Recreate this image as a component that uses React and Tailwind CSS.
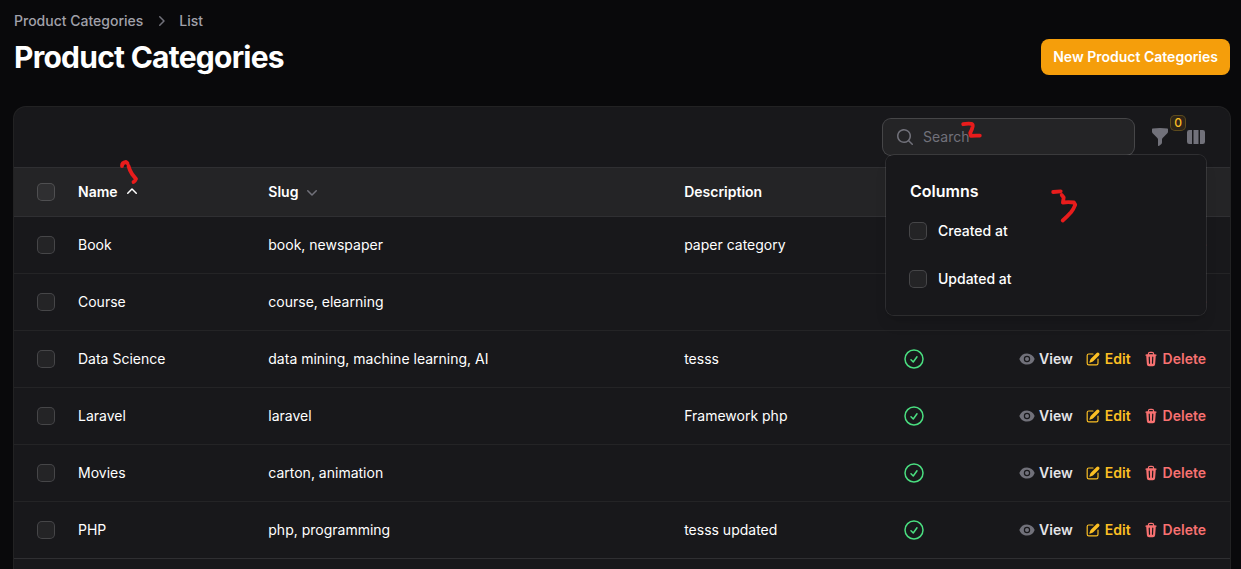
import React from "react";
import {
  HiMiniChevronDown,
  HiMiniChevronRight,
  HiMiniChevronUp,
  HiMiniEye,
  HiMiniFunnel,
  HiMiniMagnifyingGlass,
  HiMiniPencilSquare,
  HiMiniTrash,
  HiMiniViewColumns,
  HiOutlineCheckCircle,
} from "react-icons/hi2";

const categories = [
  { name: "Book", slug: "book, newspaper", description: "paper category" },
  { name: "Course", slug: "course, elearning", description: "" },
  { name: "Data Science", slug: "data mining, machine learning, AI", description: "tesss" },
  { name: "Laravel", slug: "laravel", description: "Framework php" },
  { name: "Movies", slug: "carton, animation", description: "" },
  { name: "PHP", slug: "php, programming", description: "tesss updated" },
];

function Checkbox(props) {
  return (
    <input
      type="checkbox"
      className="block size-4 shrink-0 appearance-none rounded bg-white/5 ring-1 ring-white/20 checked:bg-amber-500"
      {...props}
    />
  );
}

function RowAction({ icon: Icon, label, iconClass, textClass }) {
  return (
    <a href="#" className="flex items-center gap-1 font-semibold">
      <Icon className={`size-4 ${iconClass}`} />
      <span className={textClass}>{label}</span>
    </a>
  );
}

function ColumnsMenu() {
  return (
    <fieldset className="absolute top-full right-0 z-10 mt-2 w-80 rounded-lg bg-[#18181b] p-6 shadow-lg ring-1 ring-white/10">
      <h2 className="text-base leading-6 font-semibold">Columns</h2>
      <div className="mt-4 flex flex-col gap-6">
        {["Created at", "Updated at"].map((label) => (
          <label key={label} className="flex items-center gap-3 text-sm leading-6 font-medium">
            <Checkbox />
            {label}
          </label>
        ))}
      </div>
    </fieldset>
  );
}

function Toolbar() {
  return (
    <div className="flex items-center justify-end gap-4 px-6 py-3">
      <label className="flex h-9 w-[251px] items-center gap-2 rounded-lg bg-white/5 px-3 ring-1 ring-white/20">
        <HiMiniMagnifyingGlass className="size-5 shrink-0 text-[#71717a]" />
        <input
          type="search"
          aria-label="Search"
          placeholder="Search"
          className="w-full min-w-0 bg-transparent text-sm outline-none placeholder:text-[#71717a]"
        />
      </label>
      <button type="button" aria-label="Filter" className="relative text-[#71717a]">
        <HiMiniFunnel className="size-5" />
        <span className="absolute -top-[11px] left-[21px] flex size-3.5 items-center justify-center rounded bg-[#2e2519] text-xs font-medium text-[#fbbf24] ring-1 ring-[#fbbf24]/30">
          0
        </span>
      </button>
      <div className="relative">
        <button type="button" aria-label="Toggle columns" className="block text-[#71717a]">
          <HiMiniViewColumns className="size-5" />
        </button>
        <ColumnsMenu />
      </div>
    </div>
  );
}

function CategoryTable() {
  const headBase = "h-[49px] border-t border-white/10 bg-white/5 bg-clip-padding";
  const head = `${headBase} px-3 text-left font-semibold`;
  return (
    <table className="w-full table-fixed border-separate border-spacing-0 text-sm">
      <colgroup>
        <col className="w-[52px]" />
        <col className="w-[15.65%]" />
        <col className="w-[34.2%]" />
        <col className="w-[17.9%]" />
        <col className="w-12" />
        <col />
      </colgroup>
      <thead>
        <tr>
          <th className={`${headBase} pl-6`}>
            <Checkbox aria-label="Select all" />
          </th>
          <th className={head}>
            <button type="button" className="flex items-center gap-1">
              Name
              <HiMiniChevronUp className="size-5" />
            </button>
          </th>
          <th className={head}>
            <button type="button" className="flex items-center gap-1">
              Slug
              <HiMiniChevronDown className="size-5 text-[#71717a]" />
            </button>
          </th>
          <th className={head}>Description</th>
          <th className={head}></th>
          <th className={head}></th>
        </tr>
      </thead>
      <tbody>
        {categories.map((item, index) => {
          const cell = index === 0 ? "h-[57px] border-t border-white/10" : "h-[57px] border-t border-white/5";
          return (
            <tr key={item.name}>
              <td className={`${cell} pl-6`}>
                <Checkbox aria-label={`Select ${item.name}`} />
              </td>
              <td className={`${cell} px-3`}>{item.name}</td>
              <td className={`${cell} px-3`}>{item.slug}</td>
              <td className={`${cell} px-3`}>{item.description}</td>
              <td className={`${cell} px-3`}>
                <HiOutlineCheckCircle className="size-6 text-[#4ade80]" />
              </td>
              <td className={`${cell} pr-6 pl-3`}>
                <div className="flex items-center justify-end gap-3">
                  <RowAction icon={HiMiniEye} label="View" iconClass="text-[#71717a]" textClass="text-[#e4e4e7]" />
                  <RowAction icon={HiMiniPencilSquare} label="Edit" iconClass="text-[#fbbf24]" textClass="text-[#fbbf24]" />
                  <RowAction icon={HiMiniTrash} label="Delete" iconClass="text-[#f87171]" textClass="text-[#f87171]" />
                </div>
              </td>
            </tr>
          );
        })}
      </tbody>
    </table>
  );
}

// Hand-drawn step markers laid over the page.
function Markers() {
  const pen = {
    fill: "none",
    stroke: "#e81c1c",
    strokeWidth: 3.8,
    strokeLinecap: "round",
    strokeLinejoin: "round",
  };
  return (
    <div className="pointer-events-none absolute inset-0 z-20" aria-hidden="true">
      <svg className="absolute top-[156px] left-[116px]" width="26" height="30" viewBox="116 156 26 30" {...pen}>
        <path d="M122 166q0-3.5 4-4l1.500 1.200M128.500 166q1 4 3.500 8l4 5q-.5 1.500-2.500 3" />
      </svg>
      <svg className="absolute top-[118px] right-[256px]" width="29" height="23" viewBox="956 118 29 23" {...pen}>
        <path d="M963.200 124.200q4-.9 8.300-.4 1.500.5 1.200 2.500-.7 3.500-2.500 6.700l.8 2.900q4-.5 8.800-.2" />
      </svg>
      <svg className="absolute top-[186px] right-[161px]" width="34" height="38" viewBox="1046 186 34 38" {...pen}>
        <path d="M1053.200 192l7.500-.7M1061.700 195l2 2.500-.8 5q5.500-.6 11 0l1.300 2.300q-1.500 4-4.200 7.400-4 4.500-8.300 8.300" />
      </svg>
    </div>
  );
}

export default function App() {
  return (
    <main className="relative flex min-h-screen flex-col bg-[#09090b] pt-[11px] pr-[11px] pl-3.5 font-['Inter','Liberation_Sans',sans-serif] text-white antialiased">
      <nav aria-label="Breadcrumb" className="flex items-center gap-2 text-sm font-medium text-[#a1a1aa]">
        <a href="#">Product Categories</a>
        <HiMiniChevronRight className="size-5 text-[#71717a]" />
        <a href="#">List</a>
      </nav>
      <header className="mt-2 flex items-center justify-between gap-4">
        <h1 className="text-3xl font-bold tracking-tight">Product Categories</h1>
        <button type="button" className="h-9 rounded-lg bg-[#f59e0b] px-3 text-sm font-semibold">
          New Product Categories
        </button>
      </header>
      <section className="mt-8 flex-1 rounded-t-xl bg-[#18181b] ring-1 ring-white/10">
        <Toolbar />
        <CategoryTable />
        <div className="border-t border-white/10" />
      </section>
      <Markers />
    </main>
  );
}
